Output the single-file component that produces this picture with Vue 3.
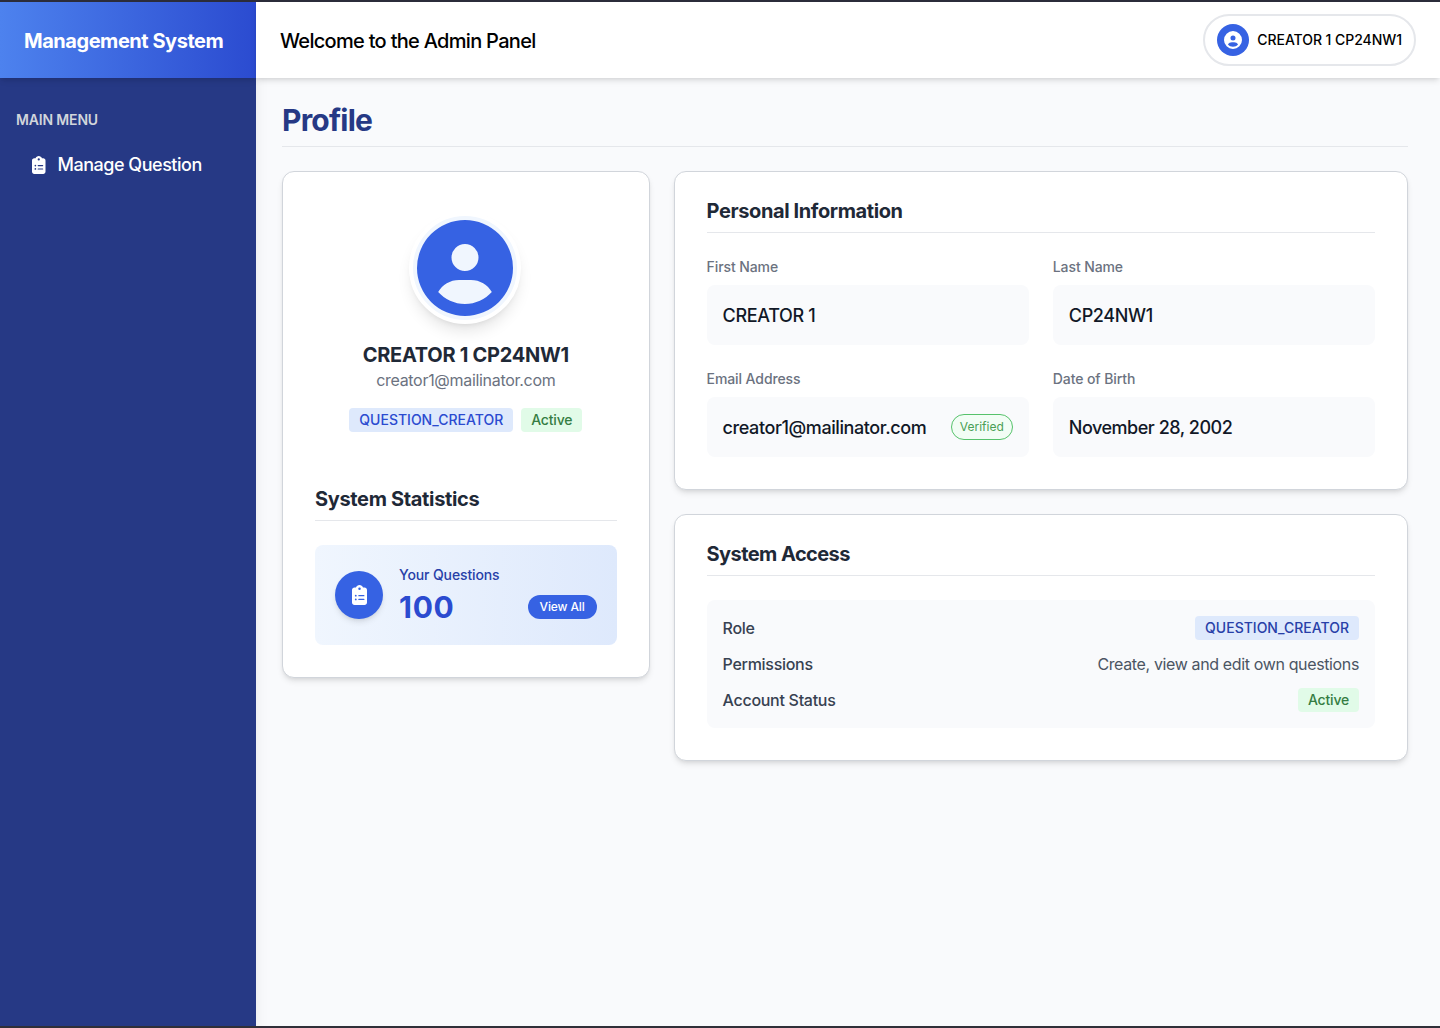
<script setup>
const icons = {
  clipboard:
    'M192 0c-41.800 0-77.400 26.700-90.500 64H64C28.700 64 0 92.700 0 128V448c0 35.300 28.700 64 64 64H320c35.300 0 64-28.700 64-64V128c0-35.300-28.700-64-64-64H282.500C269.400 26.700 233.800 0 192 0zm0 64a32 32 0 1 1 0 64 32 32 0 1 1 0-64zM72 272a24 24 0 1 1 48 0 24 24 0 1 1 -48 0zm104-16H304c8.800 0 16 7.200 16 16s-7.200 16-16 16H176c-8.800 0-16-7.200-16-16s7.200-16 16-16zM72 368a24 24 0 1 1 48 0 24 24 0 1 1 -48 0zm88 0c0-8.800 7.200-16 16-16H304c8.800 0 16 7.200 16 16s-7.200 16-16 16H176c-8.800 0-16-7.200-16-16z',
  user: 'M399 384.200C376.900 345.800 335.400 320 288 320H224c-47.400 0-88.900 25.800-111 64.200c35.200 39.200 86.200 63.800 143 63.800s107.800-24.700 143-63.800zM0 256a256 256 0 1 1 512 0A256 256 0 1 1 0 256zm256 16a72 72 0 1 0 0-144 72 72 0 1 0 0 144z',
}

const fields = [
  { label: 'First Name', value: 'CREATOR 1', kind: 'caps' },
  { label: 'Last Name', value: 'CP24NW1', kind: 'caps' },
  { label: 'Email Address', value: 'creator1@mailinator.com', kind: 'plain', verified: true },
  { label: 'Date of Birth', value: 'November 28, 2002', kind: 'date' },
]
</script>

<template>
  <div class="app">
    <aside class="sidebar">
      <div class="brand"><span>Management System</span></div>
      <nav class="menu">
        <p class="menu-title">MAIN MENU</p>
        <a class="menu-item">
          <svg viewBox="0 0 384 512" fill="currentColor"><path :d="icons.clipboard" /></svg>
          <span>Manage Question</span>
        </a>
      </nav>
    </aside>

    <div class="content">
      <header class="topbar">
        <h2>Welcome to the Admin Panel</h2>
        <div class="user-pill">
          <span class="user-icon">
            <svg viewBox="0 0 512 512" fill="currentColor"><path :d="icons.user" /></svg>
          </span>
          <span>CREATOR 1 CP24NW1</span>
        </div>
      </header>

      <main>
        <h1>Profile</h1>
        <div class="grid">
          <section class="card profile">
            <div class="avatar">
              <svg viewBox="0 0 512 512" fill="currentColor"><path :d="icons.user" /></svg>
            </div>
            <h3 class="name">CREATOR 1 CP24NW1</h3>
            <p class="mail">creator1@mailinator.com</p>
            <div class="badges">
              <span class="badge blue">QUESTION_CREATOR</span>
              <span class="badge green">Active</span>
            </div>
            <h3 class="heading stats-heading">System Statistics</h3>
            <div class="stat">
              <span class="stat-icon">
                <svg viewBox="0 0 384 512" fill="currentColor"><path :d="icons.clipboard" /></svg>
              </span>
              <div class="stat-body">
                <p class="stat-label">Your Questions</p>
                <div class="stat-row">
                  <strong>100</strong>
                  <button type="button">View All</button>
                </div>
              </div>
            </div>
          </section>

          <div class="column">
            <section class="card">
              <h3 class="heading">Personal Information</h3>
              <div class="fields">
                <div v-for="f in fields" :key="f.label">
                  <p class="label">{{ f.label }}</p>
                  <div class="value">
                    <span class="text" :class="f.kind">{{ f.value }}</span>
                    <span v-if="f.verified" class="verified">Verified</span>
                  </div>
                </div>
              </div>
            </section>

            <section class="card">
              <h3 class="heading access-heading">System Access</h3>
              <dl class="access">
                <div>
                  <dt>Role</dt>
                  <dd><span class="badge blue deep">QUESTION_CREATOR</span></dd>
                </div>
                <div>
                  <dt>Permissions</dt>
                  <dd class="permission">Create, view and edit own questions</dd>
                </div>
                <div>
                  <dt>Account Status</dt>
                  <dd><span class="badge green">Active</span></dd>
                </div>
              </dl>
            </section>
          </div>
        </div>
      </main>
    </div>
  </div>
</template>

<style>
body {
  margin: 0;
}
</style>

<style scoped>
* {
  box-sizing: border-box;
  margin: 0;
  padding: 0;
}
svg {
  display: block;
  flex: none;
}
.app {
  display: flex;
  height: 1028px;
  border-top: 2px solid #2b2c3a;
  border-bottom: 2px solid #302f38;
  background: #f9fafc;
  font-family: Inter, "Liberation Sans", sans-serif;
  font-size: 16px;
  line-height: 24px;
  color: #000;
  white-space: nowrap;
  overflow: hidden;
}
.sidebar {
  flex: none;
  width: 256px;
  background: #263985;
  color: #fff;
  box-shadow: 0 10px 15px -3px rgba(0, 0, 0, 0.1), 0 4px 6px -4px rgba(0, 0, 0, 0.1);
}
.brand {
  display: flex;
  align-items: center;
  height: 76px;
  padding: 2px 24px 0;
  background: linear-gradient(to right, #4d82ee, #2b4bd0);
  box-shadow: 0 4px 6px -1px rgba(0, 0, 0, 0.1), 0 2px 4px -2px rgba(0, 0, 0, 0.1);
  font-size: 20px;
  line-height: 28px;
  font-weight: 700;
  letter-spacing: -0.46px;
}
.menu {
  padding: 32px 16px;
}
.menu-title {
  font-size: 14px;
  line-height: 20px;
  font-weight: 600;
  letter-spacing: -0.16px;
  color: #d1d5db;
}
.menu-item {
  display: flex;
  align-items: center;
  gap: 12px;
  margin-top: 20px;
  padding: 0 16px;
  line-height: 30px;
  font-size: 18px;
  font-weight: 500;
  letter-spacing: -0.48px;
}
.menu-item svg {
  width: 13.5px;
  height: 18px;
}
.content {
  flex: 1;
  min-width: 0;
}
.topbar {
  display: flex;
  align-items: center;
  justify-content: space-between;
  height: 76px;
  padding: 0 24px;
  background: #fff;
  box-shadow: 0 4px 6px -1px rgba(0, 0, 0, 0.1), 0 2px 4px -2px rgba(0, 0, 0, 0.1);
}
.topbar h2 {
  padding-top: 2px;
  font-size: 20px;
  line-height: 28px;
  font-weight: 500;
  letter-spacing: -0.7px;
}
.user-pill {
  display: flex;
  align-items: center;
  gap: 8px;
  height: 52px;
  padding: 0 12px;
  border: 2px solid #e5e7eb;
  border-radius: 26px;
  font-size: 14px;
  font-weight: 500;
  letter-spacing: -0.05px;
}
.user-icon {
  display: grid;
  place-items: center;
  width: 32px;
  height: 32px;
  border-radius: 50%;
  background: #3662e3;
  color: #fff;
}
.user-icon svg {
  width: 18px;
  height: 18px;
}
main {
  padding: 24px 32px 24px 26px;
}
h1 {
  padding-bottom: 8px;
  border-bottom: 1px solid #e5e7eb;
  margin-bottom: 24px;
  font-size: 30px;
  line-height: 36px;
  font-weight: 700;
  letter-spacing: -0.8px;
  color: #263985;
}
.grid {
  display: grid;
  grid-template-columns: 367.6px 1fr;
  align-items: start;
  gap: 24px;
}
.column {
  display: flex;
  flex-direction: column;
  gap: 24px;
  min-width: 0;
}
.card {
  padding: 24px 32px 32px;
  border: 1px solid #d1d5db;
  border-radius: 12px;
  background: #fff;
  box-shadow: 0 4px 6px -1px rgba(0, 0, 0, 0.1), 0 2px 4px -2px rgba(0, 0, 0, 0.1);
}
.heading {
  padding: 1px 0 7px;
  border-bottom: 1px solid #e5e7eb;
  margin-bottom: 24px;
  font-size: 20px;
  line-height: 28px;
  font-weight: 700;
  letter-spacing: -0.4px;
  color: #1f2937;
}
.access-heading {
  letter-spacing: -0.57px;
}
.profile {
  display: flex;
  flex-direction: column;
  align-items: center;
  padding-top: 40px;
}
.avatar {
  display: grid;
  place-items: center;
  width: 112px;
  height: 112px;
  margin-right: 1px;
  border: 4px solid #fff;
  border-radius: 50%;
  background: #f0f6fe;
  color: #3662e3;
  box-shadow: 0 10px 15px -3px rgba(0, 0, 0, 0.1), 0 4px 6px -4px rgba(0, 0, 0, 0.1);
}
.avatar svg {
  width: 96px;
  height: 96px;
}
.name {
  margin: 16px 0 -2px;
  font-size: 20px;
  line-height: 30px;
  font-weight: 700;
  letter-spacing: -0.27px;
  color: #1f2937;
}
.mail {
  letter-spacing: -0.3px;
  color: #6b7280;
}
.badges {
  display: flex;
  gap: 8px;
  margin-top: 16px;
}
.badge {
  display: block;
  padding: 2px 10px;
  border-radius: 4px;
  font-size: 14px;
  line-height: 20px;
  font-weight: 500;
}
.blue {
  background: #dee9fc;
  color: #2b4bd0;
}
.deep {
  color: #2840a8;
}
.green {
  background: #e1fbe8;
  color: #357d43;
  letter-spacing: -0.2px;
}
.stats-heading {
  align-self: stretch;
  margin-top: 52px;
  letter-spacing: -0.34px;
}
.stat {
  align-self: stretch;
  display: flex;
  align-items: center;
  gap: 16px;
  height: 100px;
  padding: 20px;
  border-radius: 8px;
  background: linear-gradient(to right, #f0f6fe, #dee9fc);
}
.stat-icon {
  display: grid;
  place-items: center;
  width: 48px;
  height: 48px;
  border-radius: 50%;
  background: #3662e3;
  color: #fff;
  box-shadow: 0 4px 6px -1px rgba(0, 0, 0, 0.1), 0 2px 4px -2px rgba(0, 0, 0, 0.1);
}
.stat-icon svg {
  width: 15px;
  height: 20px;
}
.stat-body {
  flex: 1;
}
.stat-label {
  font-size: 14px;
  line-height: 20px;
  font-weight: 500;
  letter-spacing: -0.12px;
  color: #2840a8;
}
.stat-row {
  display: flex;
  align-items: center;
  justify-content: space-between;
  margin-top: 4px;
}
.stat-row strong {
  font-size: 30px;
  line-height: 36px;
  letter-spacing: 0.7px;
  color: #2b4bd0;
}
.stat-row button {
  border: 0;
  padding: 4px 12px;
  border-radius: 12px;
  background: #3662e3;
  color: #fff;
  font: 500 12px/16px Inter, "Liberation Sans", sans-serif;
  letter-spacing: -0.13px;
}
.fields {
  display: grid;
  grid-template-columns: 1fr 1fr;
  gap: 24px;
}
.label {
  margin-bottom: 8px;
  font-size: 14px;
  line-height: 20px;
  font-weight: 500;
  letter-spacing: -0.1px;
  color: #6b7280;
}
.value {
  display: flex;
  align-items: center;
  justify-content: space-between;
  height: 60px;
  padding: 0 16px;
  border-radius: 8px;
  background: #f9fafc;
  font-size: 18px;
  line-height: 28px;
  font-weight: 500;
  color: #111827;
}
.text {
  padding-top: 2px;
}
.caps {
  letter-spacing: -0.34px;
}
.plain {
  letter-spacing: -0.41px;
}
.date {
  letter-spacing: -0.48px;
}
.verified {
  padding: 4px 8px;
  border: 1px solid #56c26b;
  border-radius: 13px;
  background: #f2fdf5;
  color: #4aa055;
  font-size: 12px;
  line-height: 16px;
  font-weight: 400;
}
.access {
  display: flex;
  flex-direction: column;
  gap: 12px;
  padding: 16px;
  border-radius: 8px;
  background: #f9fafc;
}
.access > div {
  display: flex;
  justify-content: space-between;
}
dt {
  font-weight: 500;
  letter-spacing: -0.29px;
  color: #374151;
}
.permission {
  letter-spacing: -0.365px;
  color: #4b5563;
}
</style>
